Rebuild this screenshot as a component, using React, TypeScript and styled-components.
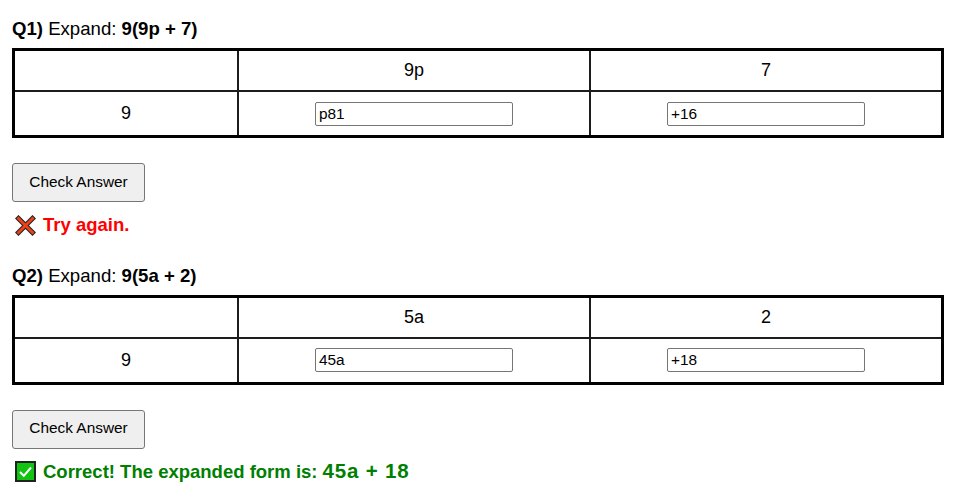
import styled, { createGlobalStyle } from "styled-components";

const GlobalStyle = createGlobalStyle`
  body {
    margin: 0;
    background: #fff;
    color: #000;
    font-family: "Liberation Sans", Arial, sans-serif;
  }
`;

const Page = styled.main`
  padding: 18px 16px 0 12px;
  display: flex;
  flex-direction: column;
  gap: 27.5px;
`;

const Question = styled.section`
  display: flex;
  flex-direction: column;
  align-items: flex-start;
`;

const Title = styled.p`
  margin: 0 0 9px;
  height: 21px;
  line-height: 21px;
  font-size: 18.6px;
`;

const Grid = styled.table`
  width: 932px;
  height: 90px;
  border-collapse: collapse;
  table-layout: fixed;
  border: 3px solid #000;
  font-size: 18px;
`;

const Cell = styled.td<{ $wide?: boolean }>`
  border: 2px solid #1c1c1c;
  padding: 0;
  text-align: center;
  width: ${(p) => (p.$wide ? "350px" : "222px")};
`;

const TopRow = styled.tr`
  height: 41.5px;
`;

const AnswerInput = styled.input`
  box-sizing: border-box;
  width: 198px;
  height: 24px;
  padding: 1px 3px;
  font-family: "Liberation Sans", Arial, sans-serif;
  font-size: 15.4px;
  vertical-align: middle;
  color: #000;
  background: #fff;
  border: 1px solid #767676;
  border-radius: 2px;
`;

const CheckButton = styled.button`
  box-sizing: border-box;
  margin-top: 25px;
  width: 133px;
  height: 39px;
  padding: 0 0 2px;
  font-family: "Liberation Sans", Arial, sans-serif;
  font-size: 15.4px;
  color: #000;
  background: #efefef;
  border: 1px solid #767676;
  border-radius: 3px;
`;

const Feedback = styled.p<{ $ok?: boolean }>`
  display: flex;
  align-items: center;
  gap: 7px;
  margin: 11px 0 0 3px;
  height: 24px;
  line-height: 24px;
  font-size: 18.5px;
  font-weight: bold;
  color: ${(p) => (p.$ok ? "#008000" : "#ff0000")};
`;

const Result = styled.b`
  font-size: 20.5px;
  line-height: 1;
  letter-spacing: 0.8px;
`;

function CrossMark() {
  return (
    <svg width="21" height="21" viewBox="0 0 21 21" aria-hidden="true">
      <path d="M3.5 3.5 L17.5 17.5 M17.5 3.5 L3.5 17.5" stroke="#262626" strokeWidth="5" strokeLinecap="square" />
      <path d="M3.5 3.5 L17.5 17.5 M17.5 3.5 L3.5 17.5" stroke="#f0401a" strokeWidth="2.8" strokeLinecap="square" />
    </svg>
  );
}

function CheckMark() {
  return (
    <svg width="21" height="21" viewBox="0 0 21 21" aria-hidden="true">
      <rect x="1" y="1" width="19" height="19" fill="#12c412" stroke="#222" strokeWidth="2" />
      <path d="M5 11 L8.8 14.8 L16 6.5" fill="none" stroke="#fff" strokeWidth="2" />
    </svg>
  );
}

interface Item {
  id: string;
  multiplier: string;
  expression: string;
  termA: string;
  termB: string;
  answerA: string;
  answerB: string;
  result?: string;
}

const items: Item[] = [
  { id: "Q1)", multiplier: "9", expression: "9(9p + 7)", termA: "9p", termB: "7", answerA: "p81", answerB: "+16" },
  { id: "Q2)", multiplier: "9", expression: "9(5a + 2)", termA: "5a", termB: "2", answerA: "45a", answerB: "+18", result: "45a + 18" },
];

export default function App() {
  return (
    <Page>
      <GlobalStyle />
      {items.map((q) => (
        <Question key={q.id}>
          <Title>
            <b>{q.id}</b> Expand: <b>{q.expression}</b>
          </Title>
          <Grid>
            <tbody>
              <TopRow>
                <Cell />
                <Cell $wide>{q.termA}</Cell>
                <Cell $wide>{q.termB}</Cell>
              </TopRow>
              <tr>
                <Cell>{q.multiplier}</Cell>
                <Cell $wide>
                  <AnswerInput defaultValue={q.answerA} />
                </Cell>
                <Cell $wide>
                  <AnswerInput defaultValue={q.answerB} />
                </Cell>
              </tr>
            </tbody>
          </Grid>
          <CheckButton>Check Answer</CheckButton>
          {q.result ? (
            <Feedback $ok>
              <CheckMark />
              <span>
                Correct! The expanded form is: <Result>{q.result}</Result>
              </span>
            </Feedback>
          ) : (
            <Feedback>
              <CrossMark />
              <span>Try again.</span>
            </Feedback>
          )}
        </Question>
      ))}
    </Page>
  );
}
